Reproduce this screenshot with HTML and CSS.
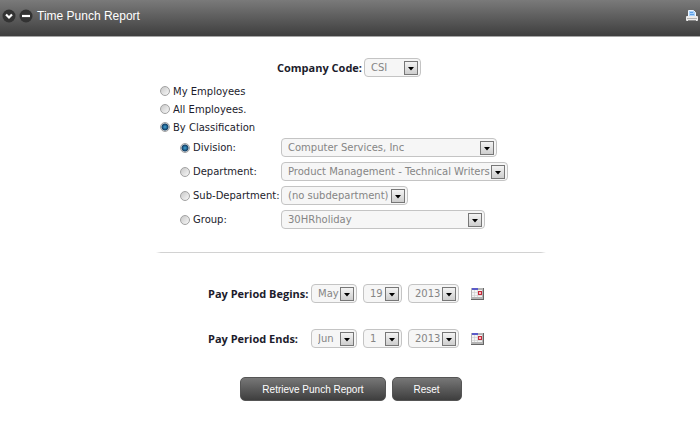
FILE: index.html
```html
<!DOCTYPE html>
<html lang="en">
<head>
    <meta charset="UTF-8">
    <meta name="viewport" content="width=device-width, initial-scale=1.0">
    <title>Time Punch Report</title>
    <link rel="stylesheet" href="styles.css">
</head>
<body>
    <header class="title-bar">
        <button type="button" class="icon-button" aria-label="Expand">
            <svg width="14" height="14" viewBox="0 0 14 14"><circle cx="7" cy="7" r="6.5" fill="#333"/><path d="M4 5.5l3 3 3-3" fill="none" stroke="#fff" stroke-width="2.2"/></svg>
        </button>
        <button type="button" class="icon-button" aria-label="Collapse">
            <svg width="14" height="14" viewBox="0 0 14 14"><circle cx="7" cy="7" r="6.5" fill="#333"/><path d="M3 7h8" stroke="#fff" stroke-width="2.2"/></svg>
        </button>
        <h1>Time Punch Report</h1>
        <a href="#" class="print-link" aria-label="Print">
            <svg width="12" height="12" viewBox="0 0 12 12">
                <path d="M2.500 .5h5l2 2v4h-7z" fill="#a9d2fb" stroke="#eef6ff"/>
                <path d="M4 2.500h3M4 4.500h4" stroke="#5b9fe8"/>
                <rect y="6" width="12" height="5" rx="1" fill="#ececec"/>
                <path d="M1 8.500h10" stroke="#b5b5b5"/>
                <path d="M2 10.500h8" stroke="#8a8a8a"/>
            </svg>
        </a>
    </header>

    <form class="report-form">
        <div class="company-row">
            <label for="company">Company Code:</label>
            <select id="company" class="w-company"><option>CSI</option></select>
        </div>

        <div class="choices">
            <label class="choice"><input type="radio" name="scope"> My Employees</label>
            <label class="choice"><input type="radio" name="scope"> All Employees.</label>
            <label class="choice"><input type="radio" name="scope" checked> By Classification</label>
        </div>

        <div class="classes">
            <label class="choice"><input type="radio" name="class" checked> Division:</label>
            <select class="w-division" aria-label="Division"><option>Computer Services, Inc</option></select>
            <label class="choice"><input type="radio" name="class"> Department:</label>
            <select class="w-department" aria-label="Department"><option>Product Management - Technical Writers</option></select>
            <label class="choice"><input type="radio" name="class"> Sub-Department:</label>
            <select class="w-sub" aria-label="Sub-Department"><option>(no subdepartment)</option></select>
            <label class="choice"><input type="radio" name="class"> Group:</label>
            <select class="w-group" aria-label="Group"><option>30HRholiday</option></select>
        </div>

        <hr>

        <div class="period-row">
            <label for="begin-month">Pay Period Begins:</label>
            <select id="begin-month" class="w-month"><option>May</option></select>
            <select class="w-day" aria-label="Begin day"><option>19</option></select>
            <select class="w-year" aria-label="Begin year"><option>2013</option></select>
            <button type="button" class="icon-button calendar" aria-label="Pick begin date">
                <svg width="13" height="12" viewBox="0 0 13 12">
                    <rect width="13" height="12" fill="#666"/><rect width="12" height="11" fill="#b4b4b4"/>
                    <rect x="1" y="2" width="10" height="7" fill="#f4f4f4"/>
                    <rect x="1" width="6" height="2" fill="#5b5bc8"/>
                    <path d="M1 4.500h10M1 7.500h10M3.500 2v7M6.500 2v7" stroke="#ccc" stroke-width=".6"/>
                    <rect x="7.500" y="3.500" width="3" height="3" fill="#fbb" stroke="#c22a3c"/>
                </svg>
            </button>
        </div>
        <div class="period-row">
            <label for="end-month">Pay Period Ends:</label>
            <select id="end-month" class="w-month"><option>Jun</option></select>
            <select class="w-day" aria-label="End day"><option>1</option></select>
            <select class="w-year" aria-label="End year"><option>2013</option></select>
            <button type="button" class="icon-button calendar" aria-label="Pick end date">
                <svg width="13" height="12" viewBox="0 0 13 12">
                    <rect width="13" height="12" fill="#666"/><rect width="12" height="11" fill="#b4b4b4"/>
                    <rect x="1" y="2" width="10" height="7" fill="#f4f4f4"/>
                    <rect x="1" width="6" height="2" fill="#5b5bc8"/>
                    <path d="M1 4.500h10M1 7.500h10M3.500 2v7M6.500 2v7" stroke="#ccc" stroke-width=".6"/>
                    <rect x="7.500" y="3.500" width="3" height="3" fill="#fbb" stroke="#c22a3c"/>
                </svg>
            </button>
        </div>

        <div class="actions">
            <button type="submit" class="btn">Retrieve Punch Report</button>
            <button type="reset" class="btn">Reset</button>
        </div>
    </form>
</body>
</html>
```
FILE: styles.css
```css
* {
    box-sizing: border-box;
}
body {
    margin: 0;
    background-color: #fff;
    color: #1c1c2c;
    font-family: Verdana, "DejaVu Sans", sans-serif;
    font-size: 10px;
}
.title-bar {
    display: flex;
    align-items: center;
    gap: 3px;
    height: 37px;
    padding: 0 2px 4px;
    background: linear-gradient(#7a7a7a, #3e3e3e);
    border-bottom: 1px solid #a5a5a5;
}
.title-bar h1 {
    margin: 0 auto 0 1px;
    color: #fff;
    font: 12px "Liberation Sans", Arial, sans-serif;
}
.icon-button {
    padding: 0;
    border: none;
    background: none;
    cursor: pointer;
}
.icon-button svg, .print-link svg {
    display: block;
}

.report-form {
    max-width: 392px;
    margin: 0 auto;
    padding: 21px 0 20px 2px;
}
.company-row {
    display: flex;
    justify-content: center;
    align-items: center;
    gap: 2px;
    margin-bottom: 5px;
    padding-right: 4px;
}
.company-row label, .period-row label {
    font: bold 11px "Open Sans", Verdana, sans-serif;
}

/* drop-downs, with the arrow box drawn at the right */
select {
    appearance: none;
    height: 19px;
    padding: 0 0 0 6px;
    border: 1px solid #c4c4c4;
    border-radius: 4px;
    background: #f6f6f6 url("data:image/svg+xml,%3Csvg xmlns='http://www.w3.org/2000/svg' width='14' height='14'%3E%3Cdefs%3E%3ClinearGradient id='g' x2='0' y2='1'%3E%3Cstop stop-color='%23f5f5f5'/%3E%3Cstop offset='1' stop-color='%23cccccc'/%3E%3C/linearGradient%3E%3C/defs%3E%3Crect x='.5' y='.5' width='13' height='13' fill='url(%23g)' stroke='%23777'/%3E%3Cpath d='M4 6h6L7 9.500z'/%3E%3C/svg%3E") no-repeat right 2px center;
    color: #858585;
    font-family: inherit;
    font-size: 10px;
}
.w-company { width: 57px; }
.w-division { width: 216px; }
.w-department { width: 227px; }
.w-sub { width: 127px; }
.w-group { width: 204px; }
.w-month { width: 46px; }
.w-day { width: 39px; }
.w-year { width: 51px; }

.choices {
    padding-left: 4px;
}
.choice {
    display: flex;
    align-items: center;
    gap: 3px;
    height: 18px;
    white-space: nowrap;
}
input[type="radio"] {
    appearance: none;
    width: 10px;
    height: 10px;
    margin: 0;
    border: 1px solid #a2a2a2;
    border-radius: 50%;
    background: linear-gradient(135deg, #c8c8c8, #f8f8f8);
}
input[type="radio"]:checked {
    background: radial-gradient(circle, #3fa4d8 0, #123f66 3px, #e6e6e6 4px);
}
.classes {
    display: grid;
    grid-template-columns: 125px auto;
    align-items: center;
    justify-items: start;
    row-gap: 5px;
    margin-top: 2px;
}
.classes .choice {
    padding-left: 24px;
}
hr {
    height: 1px;
    margin: 23px 0 31px;
    border: none;
    background: linear-gradient(to right, #fff, #d2d2d2 5px, #d2d2d2 calc(100% - 5px), #fff);
}
.period-row {
    display: flex;
    gap: 6px;
    align-items: center;
    margin-bottom: 26px;
    padding-left: 52px;
}
.period-row label {
    width: 97px;
    white-space: nowrap;
}
.calendar {
    margin-left: 6px;
}
.actions {
    display: flex;
    justify-content: center;
    gap: 6px;
    padding-top: 3px;
}
.btn {
    height: 24px;
    padding: 0 21px;
    border: 1px solid #555;
    border-radius: 5px;
    background: linear-gradient(#777, #3e3e3e);
    color: #fff;
    font: 10px "Liberation Sans", Arial, sans-serif;
    cursor: pointer;
}
```
